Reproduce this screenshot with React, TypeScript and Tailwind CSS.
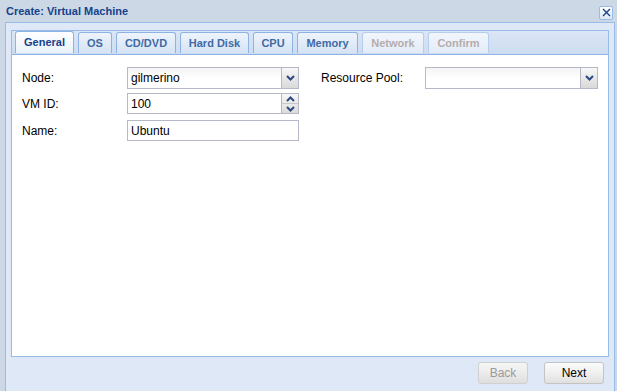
// @ts-nocheck
const tabs = [
  { label: 'General', w: 'w-[59px]', state: 'active' },
  { label: 'OS', w: 'w-[34px]', state: 'normal' },
  { label: 'CD/DVD', w: 'w-[60px]', state: 'normal' },
  { label: 'Hard Disk', w: 'w-[69px]', state: 'normal' },
  { label: 'CPU', w: 'w-[40px]', state: 'normal' },
  { label: 'Memory', w: 'w-[61px]', state: 'normal' },
  { label: 'Network', w: 'w-[62px]', state: 'disabled' },
  { label: 'Confirm', w: 'w-[61px]', state: 'disabled' },
];

function Chevron({ up = false }) {
  return (
    <svg width="9" height="6" viewBox="0 0 9 6">
      <path
        d={up ? 'M1 5 L4.5 1.5 L8 5' : 'M1 1 L4.5 4.5 L8 1'}
        fill="none"
        stroke="#2c4a82"
        strokeWidth="2"
      />
    </svg>
  );
}

function Trigger() {
  return (
    <div className="w-[17px] h-full border-l border-[#b5b8c8] bg-gradient-to-b from-[#f7f7f7] to-[#d9d9d9] flex items-center justify-center">
      <Chevron />
    </div>
  );
}

function Combo({ value = '', w = 'w-[172px]' }) {
  return (
    <div className={`${w} h-[22px] border border-[#b5b8c8] bg-gradient-to-b from-[#f4f4f4] via-white to-white flex`}>
      <div className="flex-1 pl-[3px] flex items-center text-[12px] text-black">{value}</div>
      <Trigger />
    </div>
  );
}

function Spinner({ value }) {
  return (
    <div className="w-[172px] h-[21px] border border-[#b5b8c8] bg-white flex">
      <div className="flex-1 pl-[3px] flex items-center text-[12px] text-black">{value}</div>
      <div className="w-[17px] h-full border-l border-[#b5b8c8] bg-gradient-to-b from-[#f7f7f7] to-[#dcdcdc] flex flex-col">
        <div className="flex-1 flex items-center justify-center border-b border-[#c8c8c8]">
          <Chevron up />
        </div>
        <div className="flex-1 flex items-center justify-center">
          <Chevron />
        </div>
      </div>
    </div>
  );
}

function TextField({ value }) {
  return (
    <div className="w-[172px] h-[21px] border border-[#b5b8c8] bg-white pl-[3px] flex items-center text-[12px] text-black">
      {value}
    </div>
  );
}

function Tab({ label, w, state }) {
  const base = `${w} h-[21px] border border-b-0 rounded-t-[3px] flex items-center justify-center text-[11px] font-bold`;
  if (state === 'active')
    return <div className={`${base} border-[#8db2e3] bg-gradient-to-b from-white to-[#e9f1fb] text-[#15428b] h-[22px]`}>{label}</div>;
  if (state === 'disabled')
    return <div className={`${base} border-[#b7cdec] bg-gradient-to-b from-[#f2f6fc] to-[#e2ecf8] text-[#b6acac]`}>{label}</div>;
  return <div className={`${base} border-[#8db2e3] bg-gradient-to-b from-[#eef4fc] to-[#d5e3f5] text-[#416aa3]`}>{label}</div>;
}

export default function App() {
  return (
    <div
      className="w-[617px] h-[391px] overflow-hidden bg-[#cdd8e6] flex flex-col"
      style={{ fontFamily: '"Liberation Sans", Arial, sans-serif' }}
    >
      {/* header */}
      <div className="h-[22px] flex items-center justify-between pl-[6px] pr-[4px]">
        <span className="text-[11px] font-bold text-[#15428b] leading-none">Create: Virtual Machine</span>
        <div className="w-[14px] h-[14px] mt-[3px] border border-[#99bbe8] rounded-[2px] bg-gradient-to-b from-white to-[#dce7f5] flex items-center justify-center">
          <svg width="9" height="9" viewBox="0 0 9 9">
            <path d="M1 1 L8 8 M8 1 L1 8" stroke="#15428b" strokeWidth="1.4" />
          </svg>
        </div>
      </div>

      {/* window body */}
      <div className="flex-1 flex pl-[5px]">
        <div className="w-[610px] h-full border-l border-r border-t border-[#99bbe8] bg-[#dfe8f6] px-[5px] pt-[7px] flex flex-col">
          {/* tab panel */}
          <div className="h-[327px] border border-[#99bbe8] flex flex-col">
            <div className="h-[24px] bg-gradient-to-b from-[#dae6f5] to-[#cddcf1] border-b border-[#8db2e3] flex items-end gap-[4px] pl-[3px] pb-[1px]">
              {tabs.map((t) => (
                <Tab key={t.label} {...t} />
              ))}
            </div>
            <div className="flex-1 bg-white pt-[12px] pl-[10px] flex gap-[22px] text-[12px] text-black">
              <div className="flex flex-col">
                <div className="flex items-center h-[22px]">
                  <span className="w-[105px]">Node:</span>
                  <Combo value="gilmerino" />
                </div>
                <div className="flex items-center h-[21px] mt-[4px]">
                  <span className="w-[105px]">VM ID:</span>
                  <Spinner value="100" />
                </div>
                <div className="flex items-center h-[21px] mt-[6px]">
                  <span className="w-[105px]">Name:</span>
                  <TextField value="Ubuntu" />
                </div>
              </div>
              <div className="flex flex-col">
                <div className="flex items-center h-[22px]">
                  <span className="w-[104px]">Resource Pool:</span>
                  <Combo w="w-[173px]" />
                </div>
              </div>
            </div>
          </div>

          {/* footer */}
          <div className="flex justify-end gap-[16px] pt-[5px] pr-[5px]">
            <div className="w-[50px] h-[22px] border border-[#d0d0d0] rounded-[3px] bg-gradient-to-b from-[#f6f6f6] via-[#ececec] to-[#dedede] flex items-center justify-center text-[12px] text-[#9a9a9a]">
              Back
            </div>
            <div className="w-[60px] h-[22px] border border-[#c4c4c4] rounded-[3px] bg-gradient-to-b from-[#fbfbfb] via-[#f0f0f0] to-[#e0e0e0] flex items-center justify-center text-[12px] text-black">
              Next
            </div>
          </div>
        </div>
      </div>
    </div>
  );
}
